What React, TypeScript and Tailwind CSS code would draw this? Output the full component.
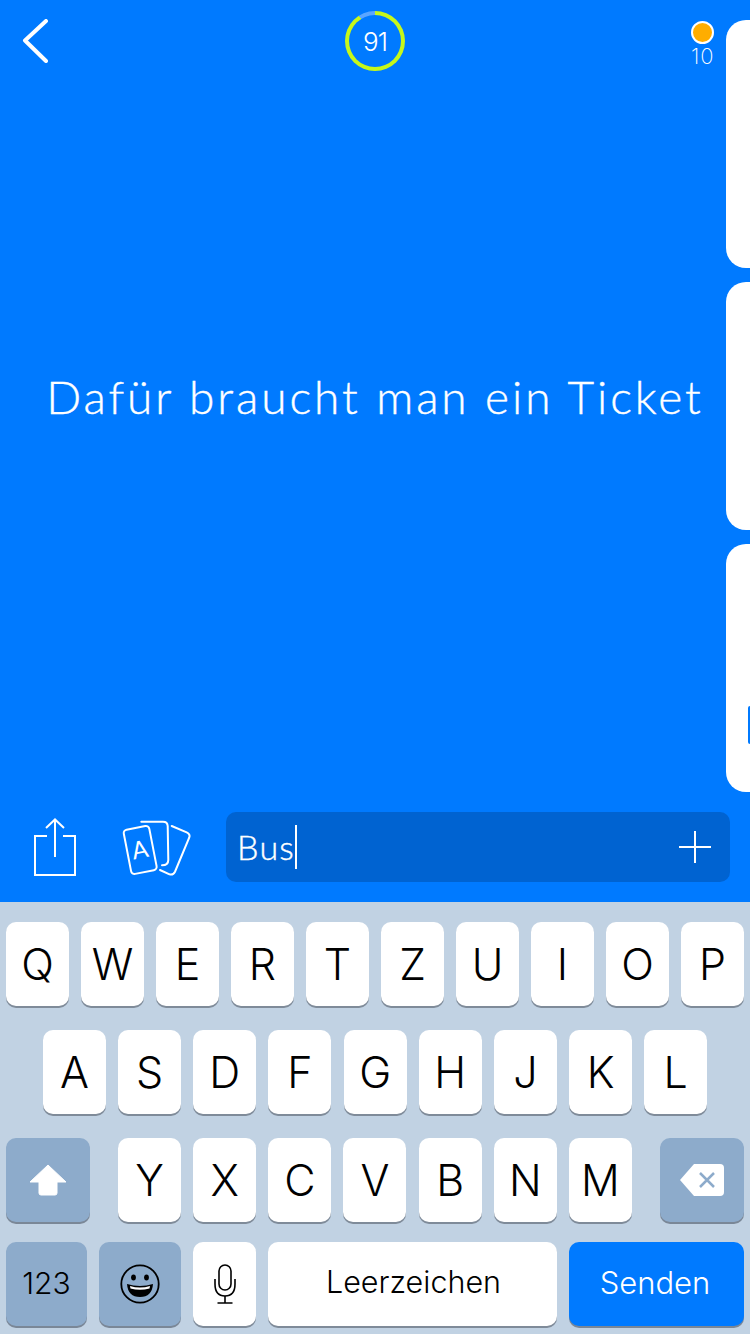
const ROW_1 = ['Q', 'W', 'E', 'R', 'T', 'Z', 'U', 'I', 'O', 'P'];
const ROW_2 = ['A', 'S', 'D', 'F', 'G', 'H', 'J', 'K', 'L'];
const ROW_3 = ['Y', 'X', 'C', 'V', 'B', 'N', 'M'];

function LetterKey({ label }: { label: string }) {
  return (
    <div className="flex h-[84px] w-[63px] items-center justify-center rounded-[10px] bg-white text-[43px] font-[350] leading-none text-black shadow-[0_2px_0_#7f8b99]">
      {label}
    </div>
  );
}

function ShiftIcon() {
  return (
    <svg width="38" height="32" viewBox="0 0 38 32">
      <path d="M19 1 L37 18 H28 V29 Q28 31 26 31 H12 Q10 31 10 29 V18 H1 Z" fill="#fff" stroke="#fff" strokeWidth="1" strokeLinejoin="round" />
    </svg>
  );
}

function DeleteIcon() {
  return (
    <svg width="44" height="32" viewBox="0 0 44 32">
      <path d="M14 0 H40 Q44 0 44 4 V28 Q44 32 40 32 H14 L0 16 Z" fill="#fff" />
      <path d="M20 9 L34 23 M34 9 L20 23" stroke="#8dabcb" strokeWidth="2.5" />
    </svg>
  );
}

function SmileIcon() {
  return (
    <svg width="40" height="40" viewBox="0 0 40 40">
      <circle cx="20" cy="20" r="18.7" fill="none" stroke="#000" strokeWidth="1.8" />
      <ellipse cx="13.5" cy="13.5" rx="2.4" ry="3" />
      <ellipse cx="26.5" cy="13.5" rx="2.4" ry="3" />
      <path d="M7 20 Q20 24 33 20 Q32 33 20 33 Q8 33 7 20 Z" />
      <path d="M10 22 Q20 25 30 22 L29.5 24.5 Q20 27 10.5 24.5 Z" fill="#fff" />
    </svg>
  );
}

function MicIcon() {
  return (
    <svg width="22" height="40" viewBox="0 0 22 40" fill="none" stroke="#000" strokeWidth="1.6">
      <rect x="5" y="1" width="12" height="25" rx="6" />
      <path d="M1 15 V20 Q1 32 11 32 Q21 32 21 20 V15" />
      <path d="M11 32 V39 M3.5 39 H18.5" />
    </svg>
  );
}

function ShareIcon() {
  return (
    <svg width="44" height="60" viewBox="0 0 44 60" fill="none" stroke="#fff" strokeWidth="2">
      <path d="M14 18 H2 V57 H42 V18 H30" />
      <path d="M22 39 V2 M13 10 L22 1.5 L31 10" />
    </svg>
  );
}

function CardsIcon() {
  return (
    <svg width="70" height="60" viewBox="0 0 70 60" fill="none" stroke="#fff" strokeWidth="2">
      <rect x="5.2" y="9.5" width="26" height="45" rx="3.5" transform="rotate(-11 18 32)" />
      <path d="M19.3 3.7 H41 Q45.5 3.7 45.7 8 L46.3 42 Q46.3 47.3 40 47.3" strokeLinecap="round" />
      <path d="M49.7 8 L64.7 14.3 Q68.5 16 67.3 19.5 L53 53.7 Q51 57.5 47.5 56.3 L38 52" strokeLinecap="round" />
      <text x="18" y="40" textAnchor="middle" fill="#fff" stroke="none" fontSize="24" fontWeight="400" fontFamily="Lato, sans-serif" transform="rotate(-11 18 32)">A</text>
    </svg>
  );
}

export default function App() {
  return (
    <div className="flex h-[1334px] w-[750px] flex-col overflow-hidden bg-[#007aff] font-['Lato',sans-serif] text-white">
      <div className="flex h-[802px]">
        <div className="flex w-[726px] flex-col">
          <div className="flex h-[82px] items-start pl-[22px] pr-[12px]">
            <div className="w-[323px] pt-[19px]">
              <svg width="28" height="44" viewBox="0 0 28 44" fill="none" stroke="#fff" strokeWidth="4" strokeLinecap="round" strokeLinejoin="round">
                <path d="M24 2 L3 21.5 L24 42" />
              </svg>
            </div>
            <div className="mt-[11px] flex h-[60px] w-[60px] items-center justify-center rounded-full bg-[conic-gradient(#c6f81a_0_91%,#5ba6ff_91%_100%)]">
              <div className="flex h-[52px] w-[52px] items-center justify-center rounded-full bg-[#007aff] font-['Inter',sans-serif] text-[26px] font-light tracking-[-1px]">91</div>
            </div>
            <div className="flex flex-1 flex-col items-end pt-[21px]">
              <div className="h-[23px] w-[23px] rounded-full border-2 border-white bg-[#ffad00]" />
              <div className="w-[23px] text-center font-['Inter',sans-serif] text-[22px] font-extralight leading-[24px] tracking-[1px]">10</div>
            </div>
          </div>
          <div className="flex flex-1 items-center justify-center pb-[90px] pl-[24px] text-[46px] font-light leading-none tracking-[2.95px] whitespace-nowrap [-webkit-text-stroke:0.4px_white]">
            Dafür braucht man ein Ticket
          </div>
        </div>
        <div className="flex w-[24px] flex-col gap-[14px] pt-[20px]">
          <div className="h-[248px] rounded-l-[20px] bg-white" />
          <div className="h-[248px] rounded-l-[20px] bg-white" />
          <div className="h-[248px] rounded-l-[20px] bg-white pl-[22px] pt-[162px]">
            <div className="h-[38px] w-[2px] rounded-l-[2px] bg-[#007aff]" />
          </div>
        </div>
      </div>

      <div className="flex h-[100px] items-start pr-[20px]">
        <div className="ml-[33px] mt-[16px]"><ShareIcon /></div>
        <div className="ml-[45px] mt-[16px]"><CardsIcon /></div>
        <div className="ml-[34px] mt-[10px] flex h-[70px] flex-1 items-center rounded-[10px] bg-[#0063d1] pl-[11px] pr-[19px]">
          <span className="text-[34px] font-light leading-none tracking-[1.3px] [-webkit-text-stroke:0.4px_white]">Bus</span>
          <div className="h-[44px] w-[2px] bg-white" />
          <svg className="ml-auto" width="32" height="32" viewBox="0 0 32 32" stroke="#fff" strokeWidth="2">
            <path d="M16 0 V32 M0 16 H32" />
          </svg>
        </div>
      </div>

      <div className="flex flex-1 flex-col bg-[#c1d2e3] pt-[20px] font-['Inter',sans-serif]">
        <div className="flex flex-col gap-[24px]">
          <div className="flex gap-[12px] px-[6px]">
            {ROW_1.map((k) => <LetterKey key={k} label={k} />)}
          </div>
          <div className="flex gap-[12.17px] pl-[43px]">
            {ROW_2.map((k) => <LetterKey key={k} label={k} />)}
          </div>
          <div className="flex px-[6px]">
            <div className="flex h-[84px] w-[84px] items-center justify-center rounded-[10px] bg-[#8dabcb] shadow-[0_2px_0_#7a8797]">
              <ShiftIcon />
            </div>
            <div className="ml-[28px] flex gap-[12.17px]">
              {ROW_3.map((k) => <LetterKey key={k} label={k} />)}
            </div>
            <div className="ml-auto flex h-[84px] w-[84px] items-center justify-center rounded-[10px] bg-[#8dabcb] shadow-[0_2px_0_#7a8797]">
              <DeleteIcon />
            </div>
          </div>
        </div>
        <div className="mt-[20px] flex gap-[12px] px-[6px]">
          <div className="flex h-[84px] w-[81px] items-center justify-center rounded-[10px] bg-[#8dabcb] pb-[2px] text-[30px] font-light leading-none text-black shadow-[0_2px_0_#7a8797]">123</div>
          <div className="flex h-[84px] w-[82px] items-center justify-center rounded-[10px] bg-[#8dabcb] shadow-[0_2px_0_#7a8797]">
            <SmileIcon />
          </div>
          <div className="flex h-[84px] w-[63px] items-center justify-center rounded-[10px] bg-white shadow-[0_2px_0_#7f8b99]">
            <MicIcon />
          </div>
          <div className="flex h-[84px] w-[289px] items-center justify-center rounded-[10px] bg-white pb-[3px] pl-[2px] text-[30.5px] font-light leading-none text-black shadow-[0_2px_0_#7f8b99]">Leerzeichen</div>
          <div className="flex h-[84px] flex-1 items-center justify-center rounded-[10px] bg-[#007aff] pb-[3px] pr-[3px] text-[31px] font-light leading-none text-white shadow-[0_2px_0_#7a8797]">Senden</div>
        </div>
      </div>
    </div>
  );
}
